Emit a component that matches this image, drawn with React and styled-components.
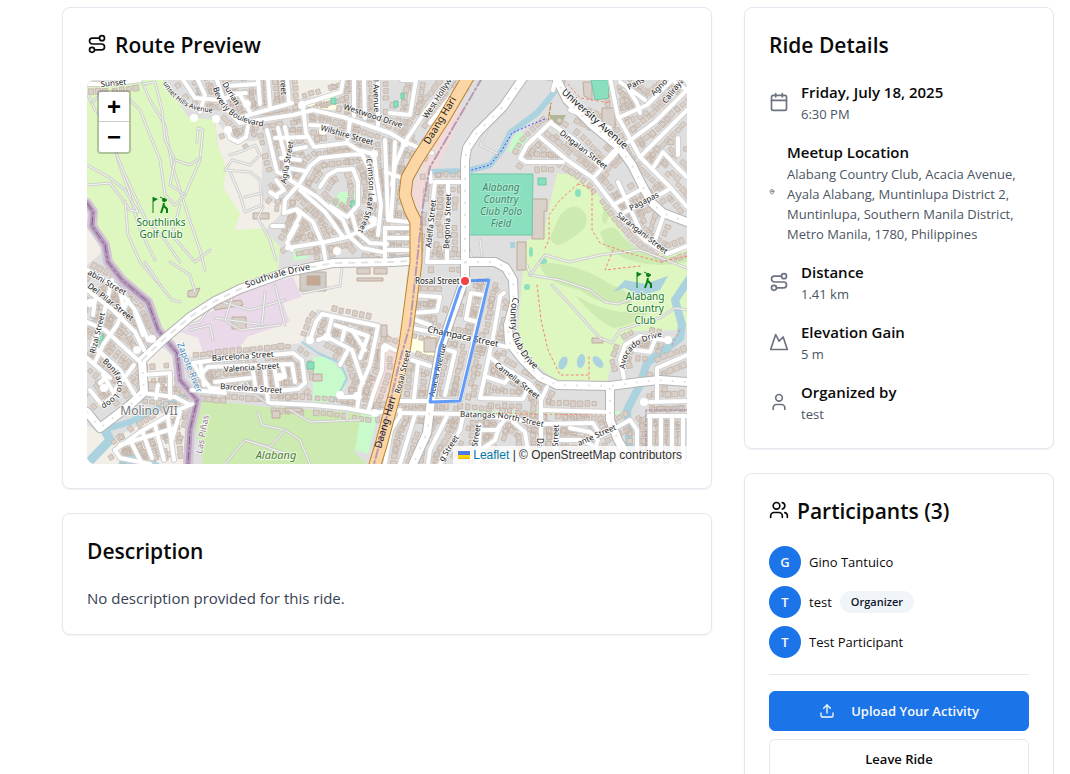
import React from "react";
import styled, { createGlobalStyle, css } from "styled-components";
import { Route, Calendar, MapPin, Mountain, User, Users, Upload } from "lucide-react";

const GlobalStyle = createGlobalStyle`
  *, *::before, *::after { box-sizing: border-box; }
  html { scrollbar-width: none; }
  body {
    margin: 0;
    background: #ffffff;
    color: #020817;
    font-family: "Segoe UI", "Open Sans", "Noto Sans", sans-serif;
    font-size: 15px;
    line-height: 24px;
  }
  h2, h3, p, ul, dl, dd, dt { margin: 0; padding: 0; }
`;

/* ---------- page ---------- */

const Page = styled.main`
  display: grid;
  grid-template-columns: minmax(0, 65fr) minmax(0, 31fr);
  gap: 32px;
  align-items: start;
  padding: 7px 16px 32px 62px;
`;

const Column = styled.div`
  display: flex;
  flex-direction: column;
  gap: 24px;
`;

const Card = styled.section`
  background: #ffffff;
  border: 1px solid #e2e8f0;
  border-radius: 8px;
  box-shadow: 0 1px 2px rgba(0, 0, 0, 0.05);
  padding: 24px;
`;

const CardTitle = styled.h2`
  display: flex;
  align-items: center;
  gap: 8px;
  height: 24px;
  margin-bottom: 24px;
  color: #0a0a0a;
  font-size: 21px;
  font-weight: 600;
  line-height: 24px;
  white-space: nowrap;
`;

const TitleText = styled.span`
  padding-top: 2px;
`;

const Description = styled.p`
  color: #374151;
`;

/* ---------- ride details ---------- */

const DetailList = styled.dl`
  display: flex;
  flex-direction: column;
  gap: 16px;
`;

const DetailRow = styled.div`
  display: flex;
  align-items: center;
  gap: 12px;
  color: #6b7280;

  svg {
    flex: none;
  }
`;

const DetailLabel = styled.dt`
  color: #0a0a0a;
  font-size: 15px;
  font-weight: 600;
  line-height: 24px;
`;

const DetailValue = styled.dd`
  color: #4b5563;
  font-size: 13px;
  line-height: 20px;
`;

/* ---------- participants ---------- */

const PeopleList = styled.ul`
  display: flex;
  flex-direction: column;
  gap: 8px;
  list-style: none;
`;

const Person = styled.li`
  display: flex;
  align-items: center;
  gap: 8px;
  color: #0a0a0a;
  font-size: 13px;
  line-height: 20px;
`;

const Avatar = styled.span`
  display: flex;
  align-items: center;
  justify-content: center;
  width: 32px;
  height: 32px;
  border-radius: 50%;
  background: #1c74e9;
  color: #f8fafc;
  font-weight: 600;
`;

const Badge = styled.span`
  padding: 3px 11px;
  border-radius: 11px;
  background: #f1f5f9;
  color: #0f172a;
  font-size: 11px;
  font-weight: 600;
  line-height: 16px;
`;

const Actions = styled.div`
  display: flex;
  flex-direction: column;
  gap: 8px;
  margin-top: 16px;
  padding-top: 16px;
  border-top: 1px solid #e2e8f0;
`;

const Button = styled.button`
  display: flex;
  align-items: center;
  justify-content: center;
  gap: 16px;
  height: 40px;
  padding: 0 16px;
  border: 1px solid #e2e8f0;
  border-radius: 6px;
  background: #ffffff;
  color: #0a0a0a;
  font-family: inherit;
  font-size: 13px;
  font-weight: 600;
  line-height: 20px;
  cursor: pointer;

  ${(p) =>
    p.$primary &&
    css`
      border-color: #1c74e9;
      background: #1c74e9;
      color: #f8fafc;
    `}
`;

/* ---------- map frame ---------- */

const MapFrame = styled.div`
  position: relative;
  height: 384px;
  overflow: hidden;
  border-radius: 8px;
  background: #dfdfdf;
`;

const MapCanvas = styled.svg`
  display: block;
  width: 100%;
  height: 100%;
`;

const ZoomControl = styled.div`
  position: absolute;
  top: 10px;
  left: 10px;
  display: flex;
  flex-direction: column;
  border: 2px solid rgba(0, 0, 0, 0.2);
  border-radius: 4px;
  background-clip: padding-box;
`;

const ZoomButton = styled.button`
  width: 30px;
  height: 30px;
  padding: 0;
  border: 0;
  border-radius: 0 0 2px 2px;
  background: #ffffff;
  color: #000000;
  font-family: "Liberation Sans", Arial, sans-serif;
  font-size: 24px;
  font-weight: 700;
  line-height: 30px;
  cursor: pointer;

  &:first-child {
    border-bottom: 1px solid #cccccc;
    border-radius: 2px 2px 0 0;
  }
`;

const Attribution = styled.div`
  position: absolute;
  right: 0;
  bottom: 0;
  padding: 0 5px;
  background: rgba(255, 255, 255, 0.8);
  color: #333333;
  font-family: "Liberation Sans", Arial, sans-serif;
  font-size: 12px;
  line-height: 18px;
  white-space: nowrap;

  a {
    color: #0078a8;
    text-decoration: none;
  }
`;

/* ---------- map data ---------- */

const MAJOR = [
  "142,360 163,340 190,317 215,301 240,289 287,272 333,263 393,262 408,261",
  "555,76 567,100 592,125 620,148 632,165 643,187 652,203 663,213 687,222",
  "523,78 503,107 477,133 467,148 465,160 465,278 452,315 440,350 431,400 427,433 413,464",
  "465,262 495,262 506,268 513,280 514,303 508,325 509,342 523,360 540,377 557,385 610,386 640,382 660,380 687,382",
  "610,388 610,420 618,440 632,464",
  "142,360 144,392 130,405 100,428 87,412",
];

const STREETS = [
  // north
  "87,84 110,84 140,80", "217,80 227,110 240,123 293,115 313,110 343,117 390,133 405,142 432,153",
  "182,78 195,98 220,100 237,94", "197,78 205,95 200,112", "226,86 258,84", "229,94 246,93",
  "242,117 292,103", "258,78 260,104", "268,78 270,108", "287,78 289,103", "240,95 250,112",
  "227,130 230,138 238,142 246,137 248,126",
  "303,107 306,133 314,147 347,143 358,150 374,154", "303,104 341,92 343,80", "354,80 354,116",
  "378,80 378,125", "350,120 347,143", "310,125 328,126", "364,80 365,118",
  // north west blocks
  "267,130 277,172 287,176", "278,128 290,178", "285,127 290,150 306,147", "275,138 306,137",
  "281,158 300,160", "288,168 305,171", "276,195 284,190 276,180", "270,192 277,197",
  // crimson leaf
  "374,154 377,180 381,205 378,235", "284,213 285,200 300,183 310,166 320,158 347,155 362,154 370,170 375,200",
  "290,180 317,197 343,220 350,237 362,248 382,252", "320,187 328,175 337,170 353,169 358,182 358,205 347,217 330,206",
  "287,248 325,242 347,237 375,224", "284,213 297,209 313,222 323,245 326,263",
  "297,225 287,243 292,250", "300,190 325,212 343,237", "352,215 357,232 370,243 387,244",
  "283,226 272,226", "297,210 300,216 289,237",
  // around Daang Hari
  "385,140 388,220 410,222", "395,142 393,190 391,218", "405,142 395,165 392,185", "402,80 416,80 410,115 390,113",
  "452,78 425,112 405,142", "462,82 430,123", "386,172 402,178", "385,228 385,262", "385,228 408,228",
  "388,238 410,238", "388,250 408,250",
  "427,262 432,210 435,182 462,182", "448,182 447,260", "427,262 465,262", "430,172 431,182",
  // university village
  "551,122 527,145 520,158 526,162 563,162", "552,124 575,140 600,166 617,148",
  "540,137 567,160 593,178 610,200 627,222 645,240 667,254 687,246",
  "593,178 617,152", "610,78 618,117 627,133 640,157 670,187 687,207", "620,117 647,105 672,80",
  "628,142 655,122 687,90", "640,157 687,110", "653,168 663,152 675,165 687,177", "627,87 637,103 640,113",
  "623,213 650,200 668,190", "618,182 640,230", "672,80 687,90", "678,138 678,155", "613,205 640,190",
  "664,214 655,240", "645,100 620,82", "570,110 610,128", "553,90 556,78",
  // acacia neighbourhood
  "413,295 440,297 437,311 413,313", "412,328 460,338 508,347", "504,293 500,296 497,315 493,337 480,398 523,399 530,384",
  "489,280 476,330 460,401 400,401", "490,357 500,365 530,384 541,398 541,464", "487,377 505,383 512,372",
  "466,319 478,322", "466,319 471,293 483,295", "448,350 455,352 445,395", "418,363 414,398", "412,360 430,366",
  "410,318 430,325",
  "400,413 463,414 513,419 540,424 593,423 601,436 630,420 637,430 637,464", "547,387 541,400",
  "400,416 391,430 385,464", "415,415 400,464", "447,416 430,450 428,464", "463,416 460,430 440,464",
  "480,425 478,464", "500,425 495,440 478,452", "513,422 525,432 530,464", "557,426 556,464", "570,428 590,432 598,440 590,464",
  "556,440 580,440 592,445", "482,430 497,430 506,418",
  "624,378 620,360 625,345 640,336 664,340", "635,350 650,352 655,340", "657,400 657,368 687,355", "650,402 687,401",
  "648,416 687,416", "650,416 650,464", "661,416 661,464", "672,416 672,464", "683,416 683,464", "541,410 610,412",
  // barcelona
  "193,363 215,360 293,353 302,360 305,383 298,389 267,392 210,388 200,375 193,363", "200,375 208,367 292,364 295,382",
  "200,362 204,385", "252,366 256,390", "264,366 268,402", "274,366 278,390", "215,382 250,378",
  "192,390 225,393", "282,365 285,377",
  "310,340 316,322 322,314 378,326 370,365 360,388 357,410", "327,337 332,317", "327,337 352,350 363,383",
  "335,325 368,336 360,358", "345,328 342,340", "340,397 360,397", "352,330 365,350", "327,337 318,340", "348,350 340,365",
  // western town
  "87,270 115,285 135,310 148,340", "87,290 113,310 135,332 144,350", "112,280 100,330 92,345", "128,300 117,325 103,345 95,362",
  "87,322 105,330 140,362", "90,302 95,300 93,315", "92,345 120,370 138,400", "103,375 115,395 102,405 90,390",
  "100,383 105,378", "135,312 143,335", "120,290 125,315", "87,358 110,378", "134,365 115,390",
  // zapote blocks
  "142,393 175,397 190,405", "142,375 170,373", "115,450 140,432 178,410 192,404", "115,450 120,458 150,464",
  "130,440 142,464", "143,433 152,458", "155,425 164,460", "168,418 174,460", "180,412 172,440", "120,445 175,428",
  "158,385 156,398", "170,375 170,398",
  // bottom road
  "270,403 313,405 345,408 373,413 400,410", "383,348 382,370 373,395 368,412", "395,350 385,345",
];

const PATHS = [
  "143,84 150,100 165,125 172,165 188,215 200,250 205,270", "143,84 155,82 162,110 165,140 175,160 170,185 185,195 200,160 203,130 198,128 197,142",
  "88,95 95,110 110,125 118,160 130,195 140,230 155,260", "87,185 110,183 130,210 138,212 125,190 110,178 87,165",
  "115,150 125,175 145,218 165,240 180,262", "185,195 175,205 165,195 160,160 148,130 140,110 130,100",
  "125,201 128,235 140,262 160,285", "175,160 190,165 200,158", "92,102 105,92 120,110", "180,205 172,235 195,262 210,250",
  "230,155 245,150 255,145 260,155 250,165 232,160 225,170 250,172 260,180 262,205 245,212 240,195 230,172",
  "245,197 262,193", "263,207 258,218 270,240 276,260", "187,325 200,322 215,300 250,310 285,300",
  "190,330 210,325 213,340", "215,318 265,325", "232,298 225,320 240,330 280,325", "265,292 262,325", "275,285 285,325",
  "342,268 340,286 303,293", "145,262 160,285 172,300 180,302", "170,262 190,275 195,292",
  "527,265 530,275 560,280 590,290 605,302 618,304 640,295", "552,285 575,310 600,338 612,343 620,330 660,318 675,308 687,310",
  "530,275 545,255 570,262 600,255 640,250 687,268", "258,412 262,425 285,430 270,447 245,440 225,464",
  "290,410 310,422 360,420", "285,430 300,440 310,464", "245,440 290,455", "347,412 347,420", "270,405 255,395 245,380",
  "466,240 472,258 482,258", "480,240 482,255", "487,130 480,145 500,155",
];

const TRAILS = [
  "578,184 560,200 549,215 549,240 545,248", "578,184 592,188 592,230 600,243 625,252 660,262 687,256",
  "613,250 605,270 640,266", "537,285 541,320 548,350 560,375 588,375", "589,357 589,382", "568,84 580,98 610,103 608,92",
  "395,412 463,413 530,414 615,415", "680,330 672,345",
];

const RIVER = "87,203 93,212 92,226 105,245 108,262 122,280 148,302 158,330 177,353 180,380 197,400 190,430 188,464";
const CREEKS = [
  ["557,88 548,100 537,113 510,133 502,150 490,165 467,171 430,172", 6],
  ["690,278 675,300 682,325 680,338 647,363 640,385 627,410 629,440 632,466", 8],
  ["87,412 103,430 130,422 165,405 185,395", 6],
  ["87,464 110,440 105,430", 9],
  ["302,342 318,353 340,363 347,378 342,388 333,402", 2],
];
const DAANG_HARI = "470,74 443,120 417,160 407,178 405,195 410,210 416,222 416,262 411,300 405,345 395,393 381,445 374,468";

const seeded = (seed) => {
  let s = seed;
  return () => ((s = (s * 16807) % 2147483647) / 2147483647);
};

// Lays small house footprints on both sides of each street.
const housesAlong = (lines) => {
  const rnd = seeded(71);
  let d = "";
  lines.forEach((line) => {
    const pts = line.split(" ").map((p) => p.split(",").map(Number));
    for (let i = 1; i < pts.length; i += 1) {
      const [ax, ay] = pts[i - 1];
      const [bx, by] = pts[i];
      const len = Math.hypot(bx - ax, by - ay);
      const ux = (bx - ax) / len;
      const uy = (by - ay) / len;
      for (let t = 4; t < len; t += 7) {
        [-1, 1].forEach((side) => {
          if (rnd() < 0.16) return;
          const off = side * (7 + rnd());
          const cx = ax + ux * t - uy * off;
          const cy = ay + uy * t + ux * off;
          const w = 2 + rnd();
          const h = 2 + rnd();
          const corner = (a, b) => `${(cx + ux * a - uy * b).toFixed(1)} ${(cy + uy * a + ux * b).toFixed(1)}`;
          d += `M${corner(-w, -h)}L${corner(w, -h)}L${corner(w, h)}L${corner(-w, h)}Z`;
        });
      }
    }
  });
  return d;
};

const HOUSES = housesAlong(STREETS);

const LABELS = [
  ["Sunset", 101, 87, -6], ["Agila Street", 286, 184, -80], ["Wilshire Street", 320, 130, 16], ["Westwood Drive", 343, 109, 18],
  ["treet", 280, 77, 86], ["Durian", 222, 84, 58], ["l Avenue", 373, 80, 88], ["West Hollyw", 427, 119, -57],
  ["Adelfa Street", 431, 248, -84], ["Begonia Street", 449, 249, -88], ["Dingalan Street", 559, 134, 38],
  ["Pagapas", 631, 211, -27], ["Sarangani Street", 616, 216, 38], ["Pans", 629, 90, -28], ["Agno", 654, 96, -45], ["Caliraya", 666, 104, -52],
  ["Rosal Street", 415, 284, 0], ["Champaca Street", 427, 332, 12, 9], ["Acacia Avenue", 434, 397, -77], ["Rosal Street", 400, 394, -76],
  ["Camella Street", 494, 366, 38],
  ["Barcelona Street", 212, 361, -4], ["Valencia Street", 224, 372, -4], ["Barcelona Street", 220, 389, 4],
  ["abini Street", 87, 274, 30], ["Del Pilar Street", 87, 287, 38], ["Rizal Street", 95, 354, -76],
  ["g Street", 443, 462, -57], ["Street", 477, 447, -80], ["Street", 558, 447, -88], ["Da", 537, 438, 90], ["ante Street", 579, 446, -24],
];

const CURVED = [
  ["sunset-hills", "M163 83Q180 116 226 112", "unset Hills Avenue", 7],
  ["beverly", "M213 88Q222 124 270 127", "Beverly Boulevard", 8],
  ["crimson", "M366 159Q375 205 355 236", "Crimson Leaf Street", 8],
  ["country-club", "M513 297Q502 345 540 374", "Country Club Drive", 9],
  ["university", "M561 93L628 153", "University Avenue", 10],
  ["southvale", "M247 288Q275 275 325 267", "Southvale Drive", 9],
  ["avocado", "M625 369Q625 344 660 337", "Avocado Drive", 8],
  ["batangas", "M460 417L502 418L548 428", "Batangas North Street", 8],
  ["bonifacio", "M102 362Q136 390 96 407", "Bonifacio Loop", 8],
  ["daang-north", "M429 145L461 92", "Daang Hari", 10],
  ["daang-south", "M381 449L398 390", "Daang Hari", 10],
];

const Line = ({ points, ...rest }) => (
  <polyline points={points} fill="none" strokeLinejoin="round" strokeLinecap="round" {...rest} />
);

const Golfer = ({ x, y }) => (
  <g transform={`translate(${x} ${y})`} stroke="#0a8014" fill="none">
    <path d="M1 17V1" strokeWidth="1" />
    <path d="M1 1L6 3L1 6Z" fill="#0a8014" stroke="none" />
    <path d="M12 7L11 11L9 17M12 10L15 13L15 17" strokeWidth="2" />
    <path d="M12 6L15 4L10 2M10 2L8 1" strokeWidth="1" />
    <circle cx="12" cy="4" r="2" fill="#0a8014" stroke="none" />
  </g>
);

const PlaceName = ({ lines, x, y, size = 10, leading = 12, fill, ...rest }) => (
  <text textAnchor="middle" fontSize={size} fill={fill} {...rest}>
    {lines.map((line, i) => (
      <tspan key={line} x={x} y={y + i * leading}>
        {line}
      </tspan>
    ))}
  </text>
);

const StreetMap = () => (
  <MapCanvas viewBox="87 80 600 384" preserveAspectRatio="xMidYMid slice" role="img" aria-label="Route map">
    <rect x="-400" y="-400" width="1700" height="1400" fill="#dfdfdf" />

    {/* open land */}
    <g fill="#f2efe9">
      <path d="M215 120L235 142L262 140L262 200L282 205L280 215L265 230L235 230L223 187Z" />
      <path d="M293 80H340V93L296 99Z" />
      <path d="M163 340L195 315L240 290L290 274L333 266L408 265L400 350L380 323L317 309L302 343L190 357Z" />
      <path d="M144 362L160 345L177 360L180 395L145 392Z" />
      <path d="M87 425L110 440L140 425L185 400L190 425L185 464H87Z" />
      <path d="M87 205L105 250L87 265Z" />
    </g>
    <path d="M180 332L203 317L240 292L293 277L302 297L283 303L290 322L247 337L240 347L223 355L203 353L198 338Z" fill="#ead9e8" />
    <path d="M450 112L466 106L425 195L422 212L410 205L413 185L425 160Z" fill="#f2dad9" />
    <path d="M378 340L404 336L397 390L375 410L368 406Z" fill="#f2dad9" />

    {/* green land */}
    <path d="M87 87L137 80H163L188 117L215 120L217 143L227 170L223 187L240 213L235 230L263 228L280 247L278 270L245 284L195 309L163 332L148 302L122 280L105 248L92 226L87 203Z" fill="#def6c0" />
    <path d="M557 173L573 175L593 187L613 217L627 240L643 257L687 248V330L633 331L613 357L607 382H557L523 353L518 330L522 280L527 240L543 237L550 203Z" fill="#def6c0" />
    <path d="M203 400L267 407L363 413L355 453L367 464H203L195 427Z" fill="#cdebb0" />
    <g fill="#cdebb0">
      <path d="M560 215Q575 198 586 215Q590 228 572 238Q555 252 550 238Z" />
      <path d="M600 232Q615 222 622 236Q645 262 687 256V262Q640 272 606 248Z" />
      <path d="M540 262Q580 264 610 284Q640 296 630 304Q600 306 580 290Q540 282 540 262Z" />
      <path d="M575 295Q600 310 622 312L655 306Q640 324 614 328Q595 320 575 295Z" />
      <path d="M606 205Q612 210 606 224Q598 222 606 205Z" />
    </g>
    <g fill="#c8facc">
      <path d="M313 357H328L347 375L345 388L330 402H313Z" />
      <path d="M330 203L340 192H356L357 206L345 214Z" />
      <path d="M513 138L520 131L530 140L513 153L508 151Z" />
      <path d="M361 413L378 415L368 454L355 450Z" />
      <path d="M294 250H306L308 258L293 261Z" />
      <path d="M216 375L242 371L244 376Z" />
      <path d="M395 411H620V415H395Z" />
    </g>
    <path d="M550 115H566L560 126L550 123Z" fill="#b5b598" />
    <path d="M606 165L618 150L625 158L612 168Z" fill="#e6d9e4" />
    <path d="M411 338L436 335V358L411 352Z" fill="#ffffe5" />
    <path d="M306 104L336 96L340 110L310 109Z" fill="#ffffe5" />

    {/* water */}
    {CREEKS.map(([points, width]) => (
      <Line key={points} points={points} stroke="#aad3df" strokeWidth={width} />
    ))}
    <path d="M613 292L625 280L645 284L668 276L660 290L640 296L625 288Z" fill="#aad3df" />
    <g fill="#aad3df">
      <ellipse cx="563" cy="363" rx="4" ry="7" transform="rotate(25 563 363)" />
      <ellipse cx="581" cy="361" rx="4" ry="7" transform="rotate(10 581 361)" />
      <ellipse cx="598" cy="362" rx="4" ry="7" transform="rotate(-40 598 362)" />
      <rect x="510" y="242" width="5" height="6" />
      <path d="M125 452L150 457L160 464H118Z" />
    </g>
    <g fill="#8ae0be">
      <ellipse cx="578" cy="193" rx="3" ry="4" />
      <ellipse cx="543" cy="261" rx="4" ry="3" />
      <ellipse cx="527" cy="287" rx="3" ry="3" />
      <ellipse cx="531" cy="252" rx="2" ry="5" />
    </g>

    {/* buildings */}
    <path d={HOUSES} fill="#d9d0c9" stroke="#c2b3a8" strokeWidth="1" strokeOpacity="0.8" />
    <g fill="#d9d0c9" stroke="#bfa999" strokeWidth="1">
      <path d="M532 199H547V211H544V239H532Z" />
      <path d="M517 242H526V270H517Z" />
      <path d="M602 108H615V128L602 124Z" />
      <path d="M583 82H592V100L584 96Z" />
      <path d="M232 317H246V329H232Z" />
      <path d="M213 304L241 300L243 305L215 310Z" />
      <path d="M300 272H326V291H300Z" fill="#d0cdc9" />
      <path d="M307 276H320V285H307Z" fill="#c4a793" />
      <path d="M357 268H370V274H357ZM374 268H387V274H374ZM357 278H383V281H357Z" />
      <path d="M148 382H157V391H148Z" />
      <path d="M188 291L200 288L196 297H188Z" />
      <path d="M272 411H280V418H272ZM285 408H302V412H285Z" />
      <path d="M253 213H269V219H253Z" />
      <path d="M313 374H322V381H313Z" />
      <path d="M381 325H387V337H381ZM378 350H384V360H378Z" />
      <path d="M424 338H436V352H424Z" />
      <path d="M592 338H603V343H592Z" />
    </g>

    {/* sport pitches */}
    <g fill="#8ae0be" stroke="#6fc9a5" strokeWidth="1">
      <path d="M469 174H533L532 235H469Z" />
      <path d="M591 80H608L609 98L595 100Z" />
      <path d="M538 178H546V185H538Z" />
      <path d="M351 201H356V208H351Z" />
      <path d="M331 98H336V104H331Z" />
      <path d="M307 362H314V369H307Z" />
      <path d="M394 101H398V107H394ZM401 93H404V99H401Z" />
      <path d="M99 334H103V341H99ZM97 343H101V351H97Z" />
    </g>

    {/* paths and trails */}
    {PATHS.map((points) => (
      <g key={points}>
        <Line points={points} stroke="#c9c9c9" strokeWidth="3" strokeOpacity="0.8" />
        <Line points={points} stroke="#f6f6f6" strokeWidth="1" />
      </g>
    ))}
    {TRAILS.map((points) => (
      <Line key={points} points={points} stroke="#fa8072" strokeWidth="1" strokeDasharray="2 3" />
    ))}
    <Line points="468,171 490,165 502,150 512,133 530,125 545,119" stroke="#3b3bff" strokeWidth="1" strokeDasharray="1 3" />
    <Line points="548,122 551,103" stroke="#b5731c" strokeWidth="1" strokeDasharray="4 2" />
    <Line points="222,86 238,122 290,103" stroke="#c79fc9" strokeWidth="1" strokeDasharray="2 3" />

    {/* boundary river */}
    <Line points={RIVER} stroke="#d3c6d6" strokeWidth="10" />
    <Line points={RIVER} stroke="#b59aba" strokeWidth="5" />
    <Line points={RIVER} stroke="#86608d" strokeWidth="1" strokeDasharray="8 3 2 3" />

    {/* streets */}
    {STREETS.map((points) => (
      <Line key={points} points={points} stroke="#d2d2d2" strokeWidth="6" />
    ))}
    {MAJOR.map((points) => (
      <Line key={points} points={points} stroke="#b4b4b4" strokeWidth="10" />
    ))}
    {STREETS.map((points) => (
      <Line key={points} points={points} stroke="#ffffff" strokeWidth="4" />
    ))}
    {MAJOR.map((points) => (
      <Line key={points} points={points} stroke="#ffffff" strokeWidth="8" />
    ))}
    {MAJOR.map((points, i) => (
      <Line key={points} points={points} stroke="#e4e4e4" strokeWidth="2" strokeDasharray={i === 0 ? "7 6" : "2 10"} strokeLinecap="butt" />
    ))}
    {[[194, 118], [216, 119], [228, 130], [302, 105], [374, 154], [373, 220], [337, 251], [323, 131], [247, 104], [137, 350], [152, 339], [310, 340], [327, 337], [340, 395], [357, 396], [280, 377], [385, 348], [375, 413], [405, 143], [668, 340], [644, 402], [90, 303], [104, 388]].map(
      ([x, y]) => (
        <circle key={`${x}-${y}`} cx={x} cy={y} r="4" fill="#ffffff" />
      )
    )}

    {/* Daang Hari and the district line */}
    <Line points={DAANG_HARI} stroke="#b98432" strokeWidth="13" />
    <Line points={DAANG_HARI} stroke="#fcd6a4" strokeWidth="11" />
    <Line points="482,78 430,167 423,205 417,262 410,325 400,360 386,420 374,464" stroke="#b79ab5" strokeWidth="2" strokeDasharray="9 3 2 3" />
    <Line points="687,410 646,410 646,464" stroke="#a582a8" strokeWidth="1" strokeDasharray="3 2" />

    {/* street names */}
    <g fontFamily="'Noto Sans', sans-serif" fill="#222222" stroke="#ffffff" strokeWidth="2" strokeOpacity="0.7" paintOrder="stroke" strokeLinejoin="round">
      {LABELS.map(([text, x, y, angle, size = 8]) => (
        <text key={`${text}-${x}`} x={x} y={y} fontSize={size} transform={`rotate(${angle} ${x} ${y})`}>
          {text}
        </text>
      ))}
      {CURVED.map(([id, d, text, size]) => (
        <React.Fragment key={id}>
          <path id={id} d={d} fill="none" stroke="none" />
          <text fontSize={size} stroke={id.startsWith("daang") ? "none" : undefined}>
            <textPath href={`#${id}`}>{text}</textPath>
          </text>
        </React.Fragment>
      ))}
      <text x="177" y="344" fontSize="9" fill="#4a8fc0" transform="rotate(68 177 344)">Zapote River</text>
      <text x="202" y="454" fontSize="9" fill="#9b7a9e" transform="rotate(-80 202 454)">Las Piñas</text>
      <PlaceName lines={["Southlinks", "Golf Club"]} x={161} y={226} fill="#157a1d" />
      <PlaceName lines={["Alabang", "Country", "Club"]} x={645} y={300} fill="#157a1d" />
      <PlaceName lines={["Alabang", "Country", "Club Polo", "Field"]} x={501} y={191} fill="#3c8a6c" fontStyle="italic" strokeOpacity="0.3" />
      <PlaceName lines={["Alabang"]} x={276} y={459} size={11} fill="#4c7f31" fontStyle="italic" />
      <PlaceName lines={["Molino VII"]} x={149} y={415} size={12} fill="#777777" />
    </g>
    <Golfer x={152} y={196} />
    <Golfer x={636} y={271} />

    {/* ride route */}
    <Line points="465,281 489,280 460,401 430,402 440,347 447,327 460,288 465,281" stroke="#3b82f6" strokeWidth="3" strokeOpacity="0.8" />
    <circle cx="465" cy="281" r="5" fill="#ef4444" stroke="#ffffff" strokeWidth="2" />
  </MapCanvas>
);

/* ---------- content ---------- */

const DETAILS = [
  { icon: <Calendar size={20} />, label: "Friday, July 18, 2025", value: "6:30 PM" },
  {
    icon: <MapPin size={6} strokeWidth={3} />,
    label: "Meetup Location",
    value: "Alabang Country Club, Acacia Avenue, Ayala Alabang, Muntinlupa District 2, Muntinlupa, Southern Manila District, Metro Manila, 1780, Philippines",
  },
  { icon: <Route size={20} />, label: "Distance", value: "1.41 km" },
  { icon: <Mountain size={20} />, label: "Elevation Gain", value: "5 m" },
  { icon: <User size={20} />, label: "Organized by", value: "test" },
];

const PEOPLE = [{ name: "Gino Tantuico" }, { name: "test", organizer: true }, { name: "Test Participant" }];

export default function App() {
  return (
    <>
      <GlobalStyle />
      <Page>
        <Column>
          <Card>
            <CardTitle>
              <Route size={20} />
              <TitleText>Route Preview</TitleText>
            </CardTitle>
            <MapFrame>
              <StreetMap />
              <ZoomControl>
                <ZoomButton type="button" aria-label="Zoom in">+</ZoomButton>
                <ZoomButton type="button" aria-label="Zoom out">−</ZoomButton>
              </ZoomControl>
              <Attribution>
                <a href="https://leafletjs.com">
                  <svg width="12" height="8" viewBox="0 0 12 8" aria-hidden="true">
                    <path fill="#4C7BE1" d="M0 0h12v4H0z" />
                    <path fill="#FFD500" d="M0 4h12v3H0z" />
                    <path fill="#E0BC00" d="M0 7h12v1H0z" />
                  </svg>{" "}
                  Leaflet
                </a>{" "}
                | © OpenStreetMap contributors
              </Attribution>
            </MapFrame>
          </Card>
          <Card>
            <CardTitle>
              <TitleText>Description</TitleText>
            </CardTitle>
            <Description>No description provided for this ride.</Description>
          </Card>
        </Column>

        <Column>
          <Card>
            <CardTitle>
              <TitleText>Ride Details</TitleText>
            </CardTitle>
            <DetailList>
              {DETAILS.map(({ icon, label, value }) => (
                <DetailRow key={label}>
                  {icon}
                  <div>
                    <DetailLabel>{label}</DetailLabel>
                    <DetailValue>{value}</DetailValue>
                  </div>
                </DetailRow>
              ))}
            </DetailList>
          </Card>
          <Card>
            <CardTitle>
              <Users size={20} />
              <TitleText>Participants (3)</TitleText>
            </CardTitle>
            <PeopleList>
              {PEOPLE.map(({ name, organizer }) => (
                <Person key={name}>
                  <Avatar>{name[0].toUpperCase()}</Avatar>
                  <span>{name}</span>
                  {organizer && <Badge>Organizer</Badge>}
                </Person>
              ))}
            </PeopleList>
            <Actions>
              <Button type="button" $primary>
                <Upload size={16} />
                Upload Your Activity
              </Button>
              <Button type="button">Leave Ride</Button>
            </Actions>
          </Card>
        </Column>
      </Page>
    </>
  );
}
